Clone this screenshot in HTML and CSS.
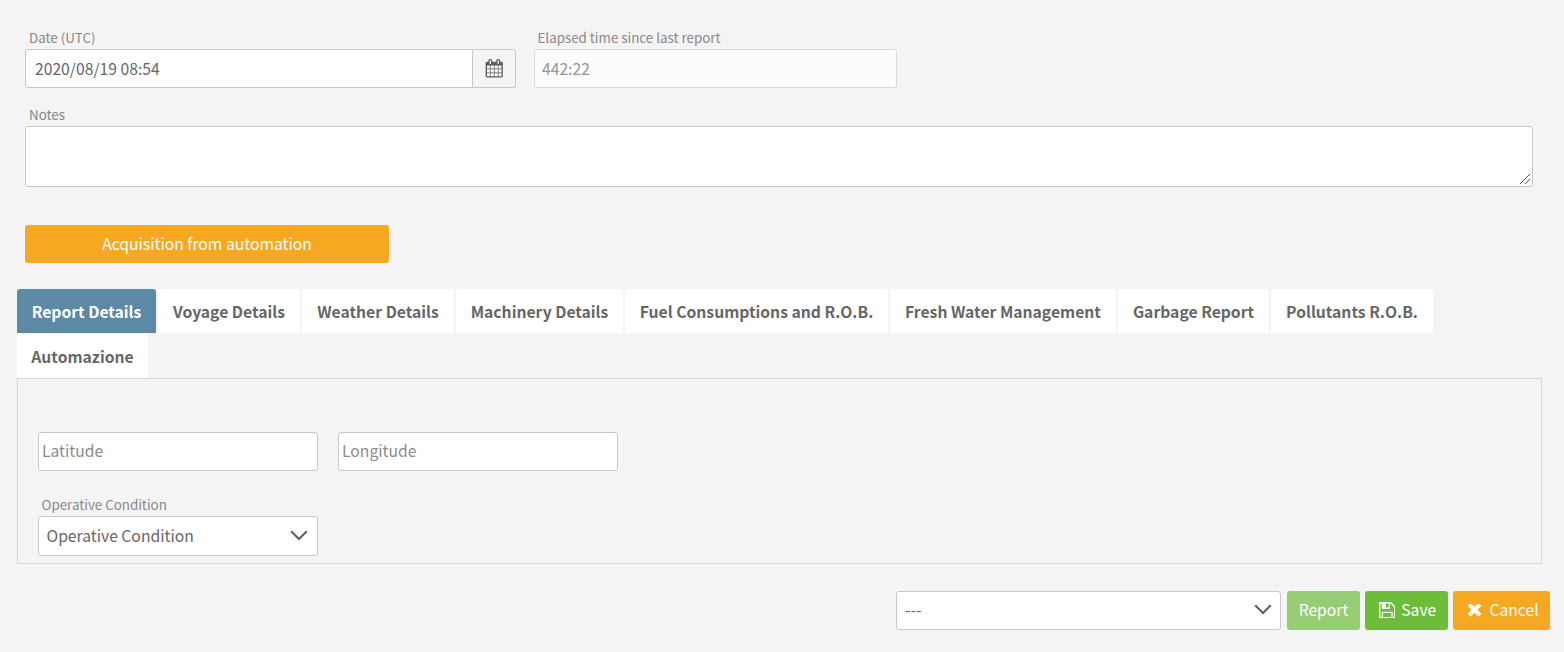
FILE: index.html
```
<!DOCTYPE html>
<html lang="en">
<head>
<meta charset="utf-8">
<title>Report</title>
<link rel="stylesheet" href="styles.css">
</head>
<body>
<form class="page">
  <div class="top-row">
    <div class="field field-date">
      <label class="label">Date (UTC)</label>
      <div class="input-group">
        <div class="control date-value"><span>2020/08/19 08:54</span></div>
        <div class="addon">
          <svg viewBox="0 0 1792 1792" width="18.500" height="18.500"><path fill="#5c5c5c" d="M192 1664h288v-288h-288v288zm352 0h320v-288h-320v288zm-352-352h288v-320h-288v320zm352 0h320v-320h-320v320zm-352-384h288v-288h-288v288zm736 736h320v-288h-320v288zm-384-736h320v-288h-320v288zm768 736h288v-288h-288v288zm-384-352h320v-320h-320v320zm-352-864v-288q0-13-9.500-22.500t-22.500-9.500h-64q-13 0-22.500 9.500t-9.500 22.500v288q0 13 9.500 22.500t22.500 9.500h64q13 0 22.500-9.500t9.500-22.500zm736 864h288v-320h-288v320zm-384-384h320v-288h-320v288zm384 0h288v-288h-288v288zm32-480v-288q0-13-9.500-22.500t-22.500-9.500h-64q-13 0-22.500 9.500t-9.500 22.500v288q0 13 9.500 22.500t22.500 9.500h64q13 0 22.500-9.500t9.500-22.500zm384-64v1280q0 52-38 90t-90 38h-1408q-52 0-90-38t-38-90v-1280q0-52 38-90t90-38h128v-96q0-66 47-113t113-47h64q66 0 113 47t47 113v96h384v-96q0-66 47-113t113-47h64q66 0 113 47t47 113v96h128q52 0 90 38t38 90z"/></svg>
        </div>
      </div>
    </div>
    <div class="field field-elapsed">
      <label class="label">Elapsed time since last report</label>
      <div class="control disabled"><span>442:22</span></div>
    </div>
  </div>
  <div class="field field-notes">
    <label class="label">Notes</label>
    <div class="notes">
      <svg width="11" height="11" viewBox="0 0 11 11" shape-rendering="crispEdges"><path d="M.5 10.500l10-10M5.500 10.500l5-5" stroke="#555" fill="none"/></svg>
    </div>
  </div>
  <button type="button" class="btn btn-orange btn-acquire"><span>Acquisition from automation</span></button>
  <nav class="tabs">
    <a class="tab tab-report active"><span>Report Details</span></a>
    <a class="tab tab-voyage"><span>Voyage Details</span></a>
    <a class="tab tab-weather"><span>Weather Details</span></a>
    <a class="tab tab-machinery"><span>Machinery Details</span></a>
    <a class="tab tab-fuel"><span>Fuel Consumptions and R.O.B.</span></a>
    <a class="tab tab-water"><span>Fresh Water Management</span></a>
    <a class="tab tab-garbage"><span>Garbage Report</span></a>
    <a class="tab tab-pollutants"><span>Pollutants R.O.B.</span></a>
    <a class="tab tab-auto"><span>Automazione</span></a>
  </nav>
  <section class="panel">
    <div class="coords">
      <div class="control placeholder"><span>Latitude</span></div>
      <div class="control placeholder"><span>Longitude</span></div>
    </div>
    <label class="label">Operative Condition</label>
    <div class="control select select-condition"><span>Operative Condition</span>
      <svg width="18" height="11" viewBox="0 0 18 11"><path d="M1.200 1.200L9 9l7.800-7.800" fill="none" stroke="#5f5f68" stroke-width="2"/></svg>
    </div>
  </section>
  <footer class="actions">
    <div class="control select select-action"><span>---</span>
      <svg width="18" height="11" viewBox="0 0 18 11"><path d="M1.200 1.200L9 9l7.800-7.800" fill="none" stroke="#5f5f68" stroke-width="2"/></svg>
    </div>
    <button type="button" class="btn btn-report"><span>Report</span></button>
    <button type="button" class="btn btn-save">
      <svg width="16.500" height="16.500" viewBox="128 128 1536 1536"><path fill="#fff" d="M512 1536h768v-384h-768v384zm896 0h128v-896q0-14-10-38.500t-20-34.500l-281-281q-10-10-34-20t-39-10v416q0 40-28 68t-68 28h-576q-40 0-68-28t-28-68v-416h-128v1280h128v-416q0-40 28-68t68-28h832q40 0 68 28t28 68v416zm-384-928v-320q0-13-9.500-22.500t-22.500-9.500h-192q-13 0-22.500 9.500t-9.500 22.500v320q0 13 9.500 22.500t22.500 9.500h192q13 0 22.500-9.500t9.500-22.500zm640 32v928q0 40-28 68t-68 28h-1344q-40 0-68-28t-28-68v-1344q0-40 28-68t68-28h928q40 0 88 20t76 48l280 280q28 28 48 76t20 88z"/></svg>
      <span>Save</span>
    </button>
    <button type="button" class="btn btn-orange btn-cancel">
      <svg width="13" height="13" viewBox="302 434 1188 1188"><path fill="#fff" d="M1490 1322q0 40-28 68l-136 136q-28 28-68 28t-68-28l-294-294-294 294q-28 28-68 28t-68-28l-136-136q-28-28-28-68t28-68l294-294-294-294q-28-28-28-68t28-68l136-136q28-28 68-28t68 28l294 294 294-294q28-28 68-28t68 28l136 136q28 28 28 68t-28 68l-294 294 294 294q28 28 28 68z"/></svg>
      <span>Cancel</span>
    </button>
  </footer>
</form>
</body>
</html>
```
FILE: styles.css
```
* { box-sizing: border-box; }
body {
  margin: 0;
  background: #f4f4f4;
  color: #666;
  font-family: "Noto Sans CJK JP", "Noto Sans", sans-serif;
  font-size: 15.7px;
  line-height: 20px;
}
.page { height: 652px; padding: 28px 14px 0 17px; }
.top-row { display: flex; gap: 18px; padding-left: 8px; }
.field-date { width: 491px; }
.field-elapsed { width: 363px; }
.label {
  display: block;
  height: 21px;
  padding-left: 4px;
  font-size: 13.35px;
  line-height: 20px;
  color: #888;
}
.field-elapsed .label { padding-left: 3.500px; }
.control {
  display: flex;
  align-items: center;
  height: 39px;
  border: 1px solid #c9c9c9;
  border-radius: 3px;
  background: #fff;
  white-space: nowrap;
}
.input-group { display: flex; }
.date-value { flex: 1; padding-left: 9px; border-radius: 3px 0 0 3px; }
.addon {
  display: flex;
  align-items: center;
  justify-content: center;
  width: 43px;
  border: 1px solid #c9c9c9;
  border-left: 0;
  border-radius: 0 3px 3px 0;
  background: #f5f5f5;
}
.addon svg { display: block; }
.disabled { padding-left: 7px; background: #fcfcfc; border-color: #d8d8d8; color: #959595; }
.field-notes { margin: 17px 0 0 8px; width: 1508px; }
.notes {
  display: flex;
  align-items: flex-end;
  justify-content: flex-end;
  height: 61px;
  padding: 0 2px 1px 0;
  border: 1px solid #c9c9c9;
  border-radius: 3px;
  background: #fff;
}
.btn {
  display: flex;
  align-items: center;
  justify-content: center;
  height: 39px;
  padding: 0;
  border: 0;
  border-radius: 3px;
  color: #fff;
  font: inherit;
}
.btn span { padding-bottom: 2px; }
.btn-orange { background: #f7a823; }
.btn-acquire { width: 364px; height: 38px; margin: 38px 0 0 8px; }
.btn-acquire span { padding-bottom: 0; }
.tabs { display: flex; flex-wrap: wrap; gap: 1px 2px; width: 1500px; margin-top: 26px; }
.tab {
  display: flex;
  align-items: center;
  justify-content: center;
  height: 44px;
  padding-top: 2px;
  border-radius: 3px 3px 0 0;
  background: #fff;
  font-weight: 700;
  white-space: nowrap;
}
.active { background: #5b89a6; color: #fff; }
.tab-report { width: 139px; }
.tab-voyage { width: 142px; }
.tab-weather { width: 152px; }
.tab-machinery { width: 167px; }
.tab-fuel { width: 263px; }
.tab-water { width: 226px; }
.tab-garbage { width: 151px; }
.tab-pollutants { width: 162px; }
.tab-auto { width: 131px; }
.panel { width: 1525px; height: 186px; border: 1px solid #d8d8d8; padding: 53px 20px 0; }
.coords { display: flex; gap: 20px; margin-bottom: 24px; }
.coords .control { width: 280px; }
.placeholder { padding: 0 0 1px 3px; color: #8c8c8c; }
.select { justify-content: space-between; padding: 0 8px 2px; }
.select-condition { width: 280px; height: 40px; padding: 0 9px 0 7.500px; }
.select-condition svg { margin-bottom: 2px; }
.panel .label { padding-left: 3.500px; }
.actions { display: flex; justify-content: flex-end; margin-top: 27px; }
.select-action { width: 385px; margin-right: 6px; }
.btn-report { width: 73px; margin-right: 5px; background: #96cd74; }
.btn-save { width: 83px; margin-right: 5px; padding-left: 2px; gap: 6px; background: #6dbd3b; }
.btn-save svg { margin-bottom: 1.500px; }
.btn-cancel { width: 97px; padding-left: 4px; gap: 8px; }
```
